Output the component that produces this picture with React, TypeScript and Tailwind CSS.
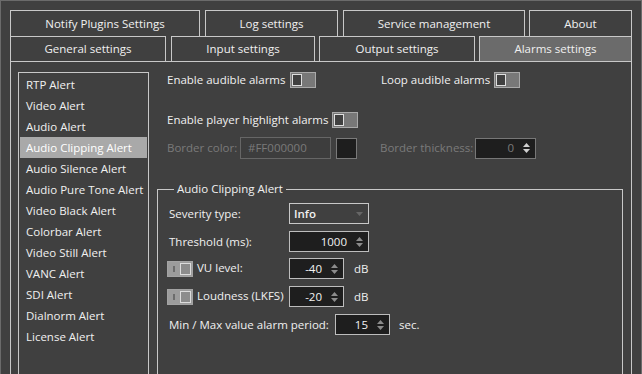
const alerts = [
  "RTP Alert",
  "Video Alert",
  "Audio Alert",
  "Audio Clipping Alert",
  "Audio Silence Alert",
  "Audio Pure Tone Alert",
  "Video Black Alert",
  "Colorbar Alert",
  "Video Still Alert",
  "VANC Alert",
  "SDI Alert",
  "Dialnorm Alert",
  "License Alert",
];

function Toggle() {
  return (
    <div className="flex h-[16px] w-[26px] shrink-0 border border-[#a9a9a9] bg-[#787878] p-[1px]">
      <div className="h-full w-[10px] border border-[#dedede] bg-[#404040]" />
    </div>
  );
}

function DisabledToggle() {
  return (
    <div className="flex h-[16px] w-[26px] shrink-0 items-center border border-[#a3a3a3] bg-[#9c9c9c] p-[1px]">
      <div className="ml-[4px] h-[6px] w-[2px] bg-[#6c6c6c]" />
      <div className="ml-auto h-full w-[11px] border border-[#dcdcdc] bg-[#8c8c8c]" />
    </div>
  );
}

function Arrows({ color }: { color: string }) {
  return (
    <svg width="7" height="12" viewBox="0 0 7 12" className="shrink-0">
      <path d="M0 5 L3.5 1 L7 5 Z" fill={color} />
      <path d="M0 7 L3.5 11 L7 7 Z" fill={color} />
    </svg>
  );
}

function Spin({
  value,
  w,
  disabled,
}: {
  value: string;
  w: string;
  disabled?: boolean;
}) {
  return (
    <div
      className={`flex h-[21px] shrink-0 items-center justify-end border bg-[#1e1e1e] pr-[5px] ${w} ${
        disabled ? "border-[#777777] text-[#7a7a7a]" : "border-[#bdbdbd] text-[#f2f2f2]"
      }`}
    >
      <span className="mr-[9px]">{value}</span>
      <Arrows color={disabled ? "#d0d0d0" : "#8c8c8c"} />
    </div>
  );
}

function Tab({
  label,
  w,
  ml,
  h,
  selected,
}: {
  label: string;
  w: string;
  ml: string;
  h: string;
  selected?: boolean;
}) {
  return (
    <div
      className={`flex items-center justify-center border-l border-r border-t border-[#c8c8c8] ${w} ${ml} ${h} ${
        selected ? "bg-[#6b6b6b]" : ""
      }`}
    >
      {label}
    </div>
  );
}

export default function App() {
  return (
    <div className="h-[374px] w-[642px] overflow-hidden border-l border-r border-t border-[#6b6b6b] bg-[#404040] pl-[9px] pt-[9px] font-['Open_Sans',sans-serif] text-[11.5px] leading-[16px] text-[#f0f0f0]">
      <div className="flex">
        <Tab label="Notify Plugins Settings" w="w-[190px]" ml="ml-0" h="h-[26px]" />
        <Tab label="Log settings" w="w-[133px]" ml="ml-[5px]" h="h-[26px]" />
        <Tab label="Service management" w="w-[182px]" ml="ml-[5px]" h="h-[26px]" />
        <Tab label="About" w="w-[103px]" ml="ml-[4px]" h="h-[26px]" />
      </div>
      <div className="flex">
        <Tab label="General settings" w="w-[156px]" ml="ml-0" h="h-[25px]" />
        <Tab label="Input settings" w="w-[144px]" ml="ml-[5px]" h="h-[25px]" />
        <Tab label="Output settings" w="w-[156px]" ml="ml-[4px]" h="h-[25px]" />
        <Tab label="Alarms settings" w="w-[153px]" ml="ml-[4px]" h="h-[25px]" selected />
      </div>

      <div className="flex h-[330px] w-[622px] border-l border-r border-t border-[#c8c8c8] pl-[7px] pt-[10px]">
        <div className="h-[320px] w-[131px] shrink-0 border border-[#c8c8c8] px-[1px] pt-[1px]">
          {alerts.map((a) => (
            <div
              key={a}
              className={`flex h-[21px] items-center pl-[6px] ${
                a === "Audio Clipping Alert" ? "bg-[#a9a9a9] text-white" : ""
              }`}
            >
              {a}
            </div>
          ))}
        </div>

        <div className="ml-[8px] flex w-[466px] flex-col">
          <div className="flex h-[16px] items-center pl-[10px]">
            <div className="flex w-[214px] items-center gap-[4px]">
              <span>Enable audible alarms</span>
              <Toggle />
            </div>
            <div className="flex items-center gap-[4px]">
              <span>Loop audible alarms</span>
              <Toggle />
            </div>
          </div>

          <div className="mt-[24px] flex h-[16px] items-center gap-[4px] pl-[10px]">
            <span>Enable player highlight alarms</span>
            <Toggle />
          </div>

          <div className="mt-[9px] flex h-[22px] items-center pl-[10px] text-[#7a7a7a]">
            <span className="w-[73px]">Border color:</span>
            <div className="flex h-[22px] w-[91px] items-center border border-[#666666] bg-[#3d3d3d] pl-[7px]">
              #FF000000
            </div>
            <div className="ml-[5px] h-[21px] w-[21px] border border-[#7a7a7a] bg-[#1e1e1e]" />
            <span className="ml-[23px] w-[95px]">Border thickness:</span>
            <Spin value="0" w="w-[61px]" disabled />
          </div>

          <fieldset className="mt-[22px] h-[200px] border border-[#c8c8c8] pl-[11px]">
            <legend className="ml-[5px] px-[3px] leading-[16px]">Audio Clipping Alert</legend>

            <div className="mt-[6px] flex h-[21px] items-center">
              <span className="w-[120px]">Severity type:</span>
              <div className="flex h-[21px] w-[80px] items-center justify-between border border-[#c8c8c8] pl-[4px] pr-[5px]">
                <span className="font-semibold">Info</span>
                <svg width="7" height="4" viewBox="0 0 7 4">
                  <path d="M0 0 L7 0 L3.5 4 Z" fill="#666666" />
                </svg>
              </div>
            </div>

            <div className="mt-[7px] flex h-[21px] items-center">
              <span className="w-[120px]">Threshold (ms):</span>
              <Spin value="1000" w="w-[80px]" />
            </div>

            <div className="-ml-[2px] mt-[6px] flex h-[21px] items-center">
              <DisabledToggle />
              <span className="ml-[4px] mb-[2px] w-[92px]">VU level:</span>
              <Spin value="-40" w="w-[55px]" />
              <span className="ml-[10px]">dB</span>
            </div>

            <div className="-ml-[2px] mt-[7px] flex h-[21px] items-center">
              <DisabledToggle />
              <span className="ml-[4px] mb-[2px] w-[92px]">Loudness (LKFS)</span>
              <Spin value="-20" w="w-[55px]" />
              <span className="ml-[10px]">dB</span>
            </div>

            <div className="mt-[7px] flex h-[21px] items-center">
              <span className="w-[166px]">Min / Max value alarm period:</span>
              <Spin value="15" w="w-[55px]" />
              <span className="ml-[9px]">sec.</span>
            </div>
          </fieldset>
        </div>
      </div>
    </div>
  );
}
